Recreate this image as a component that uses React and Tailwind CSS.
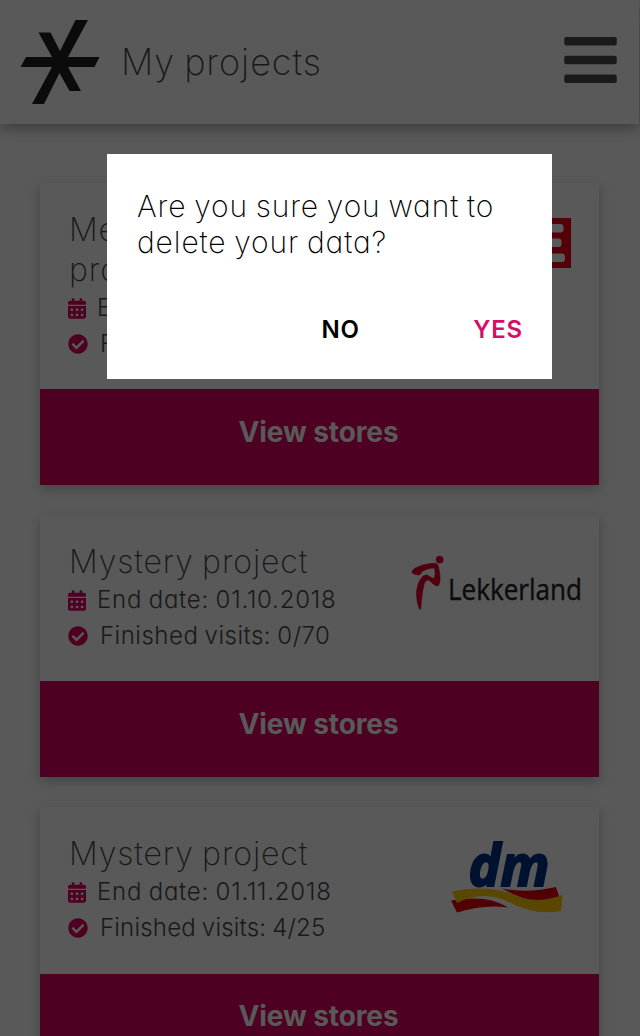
import React from "react";
import { FaBars, FaCalendarAlt, FaCheckCircle } from "react-icons/fa";

function BrandMark() {
  return (
    <svg className="h-[84px] w-20 shrink-0" viewBox="0 0 80 84" fill="#202020">
      <path d="M55.5 0H68L48 37H79.500L74.500 47H48L61 71H49.500L39.500 53L24 84H12L32 47H.5L6 37H32L18.500 12.500H30.500L40 31Z" />
    </svg>
  );
}

function ReweLogo() {
  return (
    <svg className="mt-[35px] mr-7 h-[50px] w-[136px] shrink-0" viewBox="4 0 136 50">
      <path fill="#f20018" d="M0 0H140V50H0Z" />
      <g fill="#fff">
        <rect x="108" y="6" width="24.500" height="8.500" rx="3" />
        <rect x="108" y="20.500" width="22.500" height="8.500" rx="3" />
        <rect x="108" y="35.500" width="26" height="8.500" rx="3" />
      </g>
    </svg>
  );
}

function LekkerlandLogo() {
  return (
    <svg className="mt-[40px] mr-[15px] h-[56px] w-[172px] shrink-0 overflow-visible" viewBox="0 0 172 56">
      <g fill="#e2002d" stroke="#e2002d" strokeWidth="0.6">
        <circle cx="27.700" cy="4.600" r="3.600" />
        <path d="M0 17C1 14 3 13 4.700 12.500C11 9.500 17 8.500 23 8.300C25.500 8.500 26 10 26.300 11.700C27.500 16 28.300 21 28 26C27.500 29 26.500 31 25 31C21 30 19 26 16.300 25C13.500 25.500 12.500 27.500 12 30C10 37 9.500 45 8.700 54.300L7.500 54C5.500 50 5 45 4.500 40C4.500 34 5.500 29 8 25C10 21.500 12 20 14.500 20C17 20.500 19 23 22.300 23.500C23.300 20 23.300 16 22.500 13C17 13 13.500 14.500 9.700 16.700C9.500 18.500 8 20 6.300 20C3.500 19.500 0 19 0 17Z" />
      </g>
      <text x="36" y="44.500" fontSize="29" textLength="134" lengthAdjust="spacingAndGlyphs" fill="#1d252d" stroke="#1d252d" strokeWidth="0.4" className="font-['Open_Sans',sans-serif]">
        Lekkerland
      </text>
    </svg>
  );
}

function DmLogo() {
  return (
    <svg className="mt-[31px] mr-[35px] h-[78px] w-[114px] shrink-0 overflow-visible" viewBox="0 0 114 78">
      <text x="18.500" y="47.500" fontSize="57" fontWeight="700" fontStyle="italic" textLength="81" lengthAdjust="spacingAndGlyphs" fill="#003087" stroke="#003087" strokeWidth="2" className="font-['Noto_Sans',sans-serif]">
        dm
      </text>
      <g fill="#e4000b">
        <path d="M52 50.500C70 54 88 53 106 49L109.500 60C97 66 80 66 52 50.500Z" />
        <path d="M1 62.500L7 74.500C25 69 42 67 58 69.500C45 61 27 58 1 62.500Z" />
      </g>
      <path fill="#ffc800" d="M2 53.500C22 49 45 49 62 56C82 65 96 62.500 112.500 57L111 73C93 76 79 73 65 67C43 55 26 56 7 65Z" />
    </svg>
  );
}

const projects = [
  { title: "Mercury project", date: "01.09.2018", visits: "0/50", Logo: ReweLogo, narrow: true, tracking: "tracking-[0.55px]" },
  { title: "Mystery project", date: "01.10.2018", visits: "0/70", Logo: LekkerlandLogo, tracking: "tracking-[0.5px]" },
  { title: "Mystery project", date: "01.11.2018", visits: "4/25", Logo: DmLogo, tracking: "tracking-[0.2px]" },
];

function ProjectCard({ title, date, visits, Logo, narrow, tracking }) {
  return (
    <article className="bg-white shadow-[0_4px_12px_rgba(0,0,0,0.26)]">
      <div className="flex items-start justify-between">
        <div className="pt-[27px] pb-[27.2px] pl-7">
          <h2 className={`${narrow ? "w-40" : "whitespace-nowrap"} pl-px text-[32px] leading-10 font-[250] tracking-[0.9px] [word-spacing:-1.5px]`}>
            {title}
          </h2>
          <p className="flex h-9 items-center text-2xl leading-9 font-[270] whitespace-nowrap">
            <FaCalendarAlt className="mr-[11px] h-[21px] w-[18px] text-[#dc0062]" />
            <span className="tracking-[0.77px] [word-spacing:-1px]">End date: {date}</span>
          </p>
          <p className="flex h-9 items-center text-2xl leading-9 font-[270] whitespace-nowrap">
            <FaCheckCircle className="mr-3 size-5 text-[#dc0062]" />
            <span className={`${tracking} [word-spacing:-1px]`}>Finished visits: {visits}</span>
          </p>
        </div>
        <Logo />
      </div>
      <button className="block h-24 w-full bg-[#dc0062] pr-0.5 pb-[11px] text-[28px] font-bold tracking-[-0.1px] text-white">
        View stores
      </button>
    </article>
  );
}

export default function App() {
  return (
    <div className="relative h-[1036px] w-[640px] overflow-hidden bg-white font-['Inter',sans-serif] text-[#4a4a4a] [font-feature-settings:'cv11']">
      <header className="flex h-[124px] w-[639px] items-center bg-white pr-[22px] pl-5 shadow-[0_4px_14px_rgba(0,0,0,0.35)]">
        <BrandMark />
        <h1 className="ml-[21px] flex-1 text-[36px] font-[250] tracking-[0.95px] [word-spacing:-2px]">My projects</h1>
        <FaBars className="mb-[5px] h-[60px] w-[53px]" />
      </header>
      <main className="flex w-[639px] flex-col gap-[30px] px-10 pt-[59px]">
        {projects.map((p) => (
          <ProjectCard key={p.date} {...p} />
        ))}
      </main>
      <div className="absolute inset-0 flex items-start bg-black/65 pt-[154px] pl-[107px]">
        <div role="dialog" className="flex h-[225px] w-[445px] flex-col justify-between bg-white px-[30px] pt-[34px] pb-[31px] text-black">
          <p className="text-[30px] leading-9 font-[230] tracking-[0.88px] whitespace-nowrap [word-spacing:-1.5px]">
            Are you sure you want to
            <br />
            delete your data?
          </p>
          <div className="flex justify-end text-2xl leading-9 font-semibold">
            <button className="mr-[113.5px] tracking-[0.8px]">NO</button>
            <button className="-mr-px tracking-[0.8px] text-[#d50f67]">YES</button>
          </div>
        </div>
      </div>
    </div>
  );
}
